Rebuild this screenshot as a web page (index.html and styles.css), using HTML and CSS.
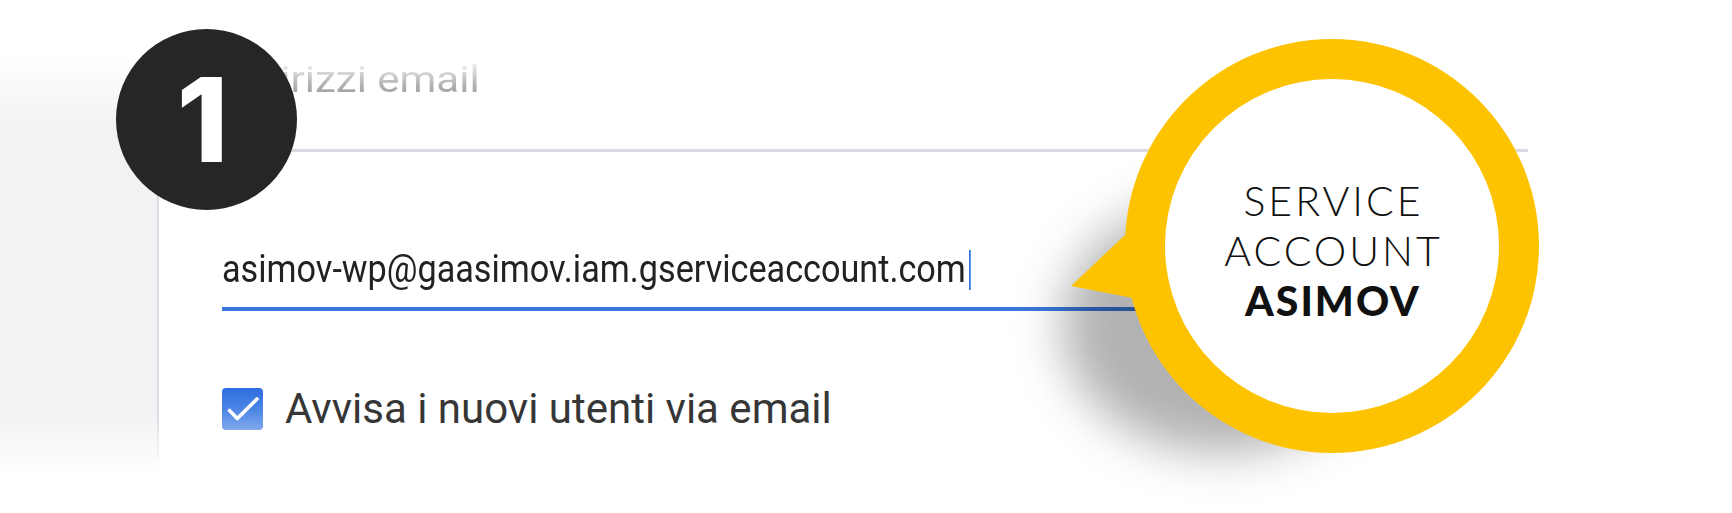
FILE: index.html
```html
<!DOCTYPE html>
<html lang="it">
<head>
<meta charset="utf-8">
<title>Service account Asimov</title>
<link rel="stylesheet" href="styles.css">
</head>
<body>
<div class="stage">
  <aside class="sidebar"></aside>
  <main class="main">
    <div class="field-label"><span class="label-text">Indirizzi email</span></div>
    <section class="card">
      <div class="input">
        <span class="input-text">asimov-wp@gaasimov.iam.gserviceaccount.com</span>
      </div>
      <label class="check-row">
        <span class="checkbox">
          <svg width="41" height="42" viewBox="0 0 41 42"><polyline points="7.5,22.5 15.3,30.5 35,11" fill="none" stroke="#fff" stroke-width="3.6" stroke-linecap="round" stroke-linejoin="round"/></svg>
        </span>
        <span class="check-text">Avvisa i nuovi utenti via email</span>
      </label>
    </section>
  </main>

  <div class="step-badge"><span class="step-num">1</span></div>

  <div class="bubble">
    <div class="bubble-shadow"></div>
    <svg class="bubble-shape" width="500" height="440" viewBox="0 0 500 440">
      <polygon points="65,205 11,256 73,268 110,275 110,195" fill="#fdc300"/>
      <circle cx="272" cy="216" r="207" fill="#fdc300"/>
      <circle cx="272" cy="216" r="167" fill="#ffffff"/>
    </svg>
    <div class="bubble-text">
      <span class="bt-light">SERVICE</span>
      <span class="bt-light">ACCOUNT</span>
      <span class="bt-bold">ASIMOV</span>
    </div>
  </div>
</div>
</body>
</html>
```

FILE: styles.css
```css
html, body {
  margin: 0;
  padding: 0;
  background: #ffffff;
}
body {
  width: 1732px;
  height: 513px;
  overflow: hidden;
  font-family: Roboto, "Liberation Sans", sans-serif;
}
.stage {
  position: relative;
  display: flex;
  width: 1732px;
  height: 513px;
}
.sidebar {
  width: 157px;
  flex: 0 0 157px;
  background: linear-gradient(to bottom, #ffffff 0px, #ffffff 55px, #f1f2f4 130px, #f1f2f4 415px, #ffffff 475px);
  border-top-left-radius: 22px;
}
.main {
  display: flex;
  flex-direction: column;
  width: 1371px;
}
.field-label {
  height: 149px;
  box-sizing: border-box;
  padding: 54px 0 0 65px;
}
.label-text {
  display: inline-block;
  font-size: 42px;
  line-height: 48px;
  color: transparent;
  background: linear-gradient(to bottom, #f4f4f4 0px, #e4e4e4 10px, #b6b6b6 28px, #a2a2a2 40px);
  -webkit-background-clip: text;
  background-clip: text;
  transform: scaleY(0.88);
  transform-origin: left 38px;
}
.card {
  height: 322px;
  box-sizing: border-box;
  border-top: 3px solid #d9dadf;
  border-bottom-left-radius: 12px;
  padding: 0 65px;
  background: linear-gradient(to bottom, #dadce0 0%, #dadce0 82%, rgba(218,220,224,0) 100%) no-repeat left top / 2px 100%;
}
.input {
  padding-top: 94px;
  padding-bottom: 15px;
  border-bottom: 4px solid #3a77dc;
  white-space: nowrap;
}
.input-text {
  display: inline-block;
  font-size: 38px;
  line-height: 46px;
  color: #222222;
  transform: scaleX(0.9);
  transform-origin: left center;
}
.input-text::after {
  content: "";
  display: inline-block;
  width: 2px;
  height: 40px;
  margin-left: 3px;
  vertical-align: -8px;
  background: #3a77dc;
}
.check-row {
  display: flex;
  align-items: center;
  gap: 22px;
  margin-top: 73px;
  height: 50px;
}
.checkbox {
  width: 41px;
  height: 42px;
  border-radius: 4px;
  background: linear-gradient(to bottom, #2d6edf 0%, #4b84e4 50%, #81aaee 100%);
  display: block;
}
.checkbox svg {
  display: block;
}
.check-text {
  font-size: 42px;
  line-height: 50px;
  color: #363636;
}
.step-badge {
  position: absolute;
  left: 116px;
  top: 29px;
  width: 181px;
  height: 181px;
  border-radius: 50%;
  background: #262626;
  display: flex;
  align-items: center;
  justify-content: center;
}
.step-num {
  font-family: Inter, "Liberation Sans", sans-serif;
  font-weight: 800;
  font-size: 117px;
  line-height: 1;
  color: #ffffff;
  margin-right: 8px;
}
.bubble {
  position: absolute;
  left: 1060px;
  top: 30px;
  width: 500px;
  height: 440px;
}
.bubble-shadow {
  position: absolute;
  left: 2px;
  top: 168px;
  width: 320px;
  height: 255px;
  border-radius: 50%;
  background: rgba(0,0,0,0.3);
  filter: blur(24px);
}
.bubble-shape {
  position: relative;
  display: block;
}
.bubble-text {
  position: absolute;
  left: 72px;
  top: 146px;
  width: 400px;
  display: flex;
  flex-direction: column;
  align-items: center;
  font-family: Lato, "Open Sans", sans-serif;
  font-size: 41px;
  line-height: 50px;
  color: #111111;
}
.bt-light {
  font-weight: 300;
  letter-spacing: 3px;
  margin-right: -3px;
}
.bt-bold {
  font-weight: 900;
  letter-spacing: 2px;
  margin-right: -2px;
}
```
